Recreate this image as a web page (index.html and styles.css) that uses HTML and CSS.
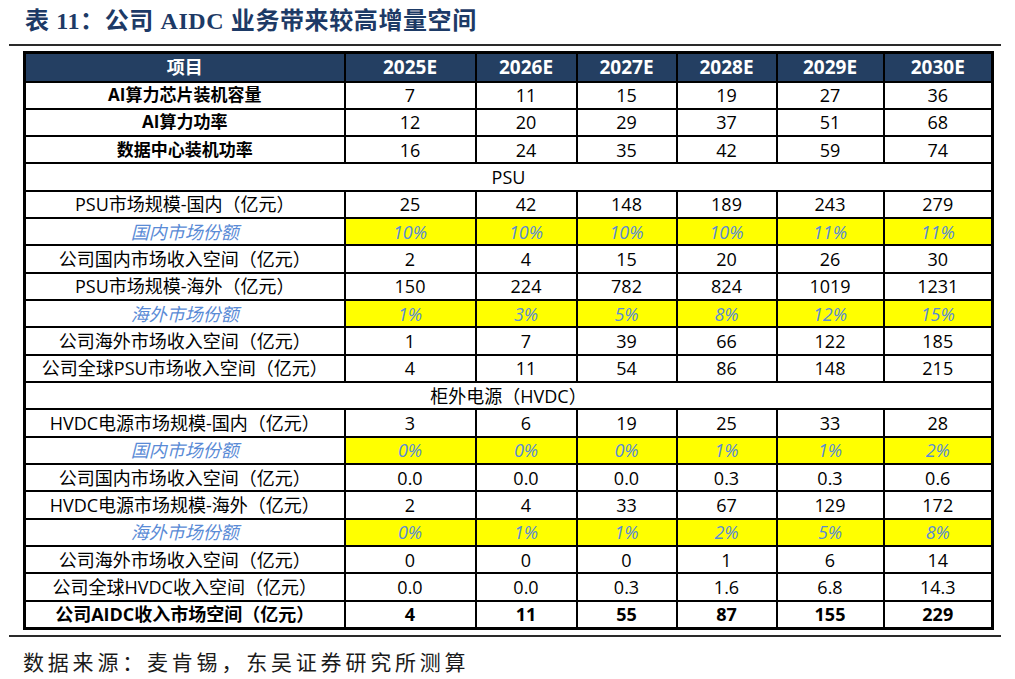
FILE: index.html
```html
<!DOCTYPE html>
<html lang="zh">
<head>
<meta charset="utf-8">
<title>表 11</title>
<link rel="stylesheet" href="styles.css">
</head>
<body>
<div class="page">
  <h1 class="title">表 11：公司 AIDC 业务带来较高增量空间</h1>
  <div class="rule"></div>
  <table class="data">
    <colgroup>
      <col class="c-item"><col class="c-y1"><col class="c-y2"><col class="c-y3"><col class="c-y4"><col class="c-y5"><col class="c-y6">
    </colgroup>
    <thead>
      <tr><th>项目</th><th>2025E</th><th>2026E</th><th>2027E</th><th>2028E</th><th>2029E</th><th>2030E</th></tr>
    </thead>
    <tbody>
      <tr><td class="b">AI算力芯片装机容量</td><td>7</td><td>11</td><td>15</td><td>19</td><td>27</td><td>36</td></tr>
      <tr><td class="b">AI算力功率</td><td>12</td><td>20</td><td>29</td><td>37</td><td>51</td><td>68</td></tr>
      <tr><td class="b">数据中心装机功率</td><td>16</td><td>24</td><td>35</td><td>42</td><td>59</td><td>74</td></tr>
      <tr class="section"><td colspan="7">PSU</td></tr>
      <tr><td>PSU市场规模-国内（亿元）</td><td>25</td><td>42</td><td>148</td><td>189</td><td>243</td><td>279</td></tr>
      <tr class="share"><td>国内市场份额</td><td>10%</td><td>10%</td><td>10%</td><td>10%</td><td>11%</td><td>11%</td></tr>
      <tr><td>公司国内市场收入空间（亿元）</td><td>2</td><td>4</td><td>15</td><td>20</td><td>26</td><td>30</td></tr>
      <tr><td>PSU市场规模-海外（亿元）</td><td>150</td><td>224</td><td>782</td><td>824</td><td>1019</td><td>1231</td></tr>
      <tr class="share"><td>海外市场份额</td><td>1%</td><td>3%</td><td>5%</td><td>8%</td><td>12%</td><td>15%</td></tr>
      <tr><td>公司海外市场收入空间（亿元）</td><td>1</td><td>7</td><td>39</td><td>66</td><td>122</td><td>185</td></tr>
      <tr><td>公司全球PSU市场收入空间（亿元）</td><td>4</td><td>11</td><td>54</td><td>86</td><td>148</td><td>215</td></tr>
      <tr class="section"><td colspan="7">柜外电源（HVDC）</td></tr>
      <tr><td>HVDC电源市场规模-国内（亿元）</td><td>3</td><td>6</td><td>19</td><td>25</td><td>33</td><td>28</td></tr>
      <tr class="share"><td>国内市场份额</td><td>0%</td><td>0%</td><td>0%</td><td>1%</td><td>1%</td><td>2%</td></tr>
      <tr><td>公司国内市场收入空间（亿元）</td><td>0.0</td><td>0.0</td><td>0.0</td><td>0.3</td><td>0.3</td><td>0.6</td></tr>
      <tr><td>HVDC电源市场规模-海外（亿元）</td><td>2</td><td>4</td><td>33</td><td>67</td><td>129</td><td>172</td></tr>
      <tr class="share"><td>海外市场份额</td><td>0%</td><td>1%</td><td>1%</td><td>2%</td><td>5%</td><td>8%</td></tr>
      <tr><td>公司海外市场收入空间（亿元）</td><td>0</td><td>0</td><td>0</td><td>1</td><td>6</td><td>14</td></tr>
      <tr><td>公司全球HVDC收入空间（亿元）</td><td>0.0</td><td>0.0</td><td>0.3</td><td>1.6</td><td>6.8</td><td>14.3</td></tr>
      <tr class="total"><td>公司AIDC收入市场空间（亿元）</td><td>4</td><td>11</td><td>55</td><td>87</td><td>155</td><td>229</td></tr>
    </tbody>
  </table>
  <div class="rule rule-bottom"></div>
  <p class="source">数据来源：麦肯锡，东吴证券研究所测算</p>
</div>
</body>
</html>
```

FILE: styles.css
```css
html, body {
  margin: 0;
  padding: 0;
  background: #ffffff;
}

.page {
  width: 1015px;
  font-family: "Open Sans", "Noto Sans CJK SC", sans-serif;
  color: #000;
}

.title {
  margin: 0;
  height: 44px;
  padding-left: 25px;
  box-sizing: border-box;
  padding-top: 6px;
  font-family: "Liberation Serif", "Noto Sans CJK SC", serif;
  font-weight: bold;
  font-size: 24px;
  line-height: 30px;
  letter-spacing: 0.6px;
  color: #1d3a66;
}

.rule {
  height: 2px;
  margin: 0 14px 0 9px;
  background: #2a2a2a;
}

.data {
  margin: 5px 0 0 23px;
  width: 969px;
  table-layout: fixed;
  border-collapse: collapse;
  border: 3px solid #000;
  font-size: 18px;
}

.c-item { width: 320px; }
.c-y1 { width: 131px; }
.c-y2 { width: 101px; }
.c-y3 { width: 100px; }
.c-y4 { width: 100px; }
.c-y5 { width: 107px; }
.c-y6 { width: 109px; }

.data th,
.data td {
  border: 2px solid #000;
  padding: 0;
  text-align: center;
  vertical-align: middle;
  line-height: 22px;
  white-space: nowrap;
}

.data thead tr { height: 29px; }

.data th {
  background: #243f62;
  color: #fff;
  font-weight: bold;
  font-size: 19px;
}

.data th:first-child {
  font-size: 18px;
}

.data tbody tr { height: 27.33px; }

.data td.b { font-weight: bold; font-size: 17px; }

.data tr.share td {
  background: #ffff00;
  color: #5a8bd6;
  font-style: italic;
}

.data tr.share td:first-child {
  background: #fff;
}

.data tr.total td { font-weight: bold; }

.rule-bottom {
  margin-top: 5px;
}

.source {
  margin: 10px 0 0 23px;
  font-family: "Noto Sans CJK SC", serif;
  font-size: 21px;
  line-height: 28px;
  letter-spacing: 3.8px;
  color: #1a1a1a;
}
```
